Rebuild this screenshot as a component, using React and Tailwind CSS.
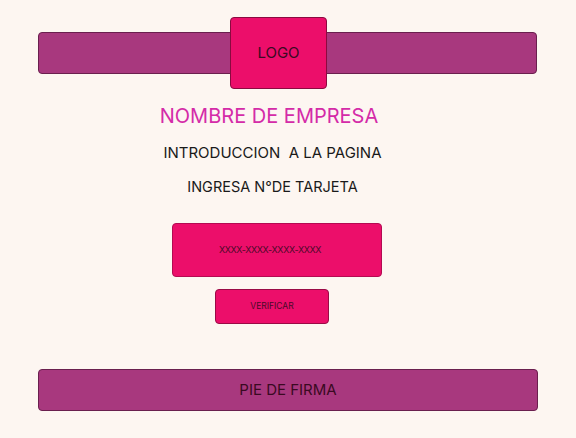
import React from 'react';

export default function App() {
    return (
        <div
            className="w-[576px] h-[438px] bg-[#fdf6f1] text-[#1a1a1a] flex flex-col"
            style={{ fontFamily: 'Inter, "Noto Sans", sans-serif' }}
        >
            {/* cabecera con logo */}
            <div className="relative pt-[32px] px-[38px]">
                <div className="h-[42px] w-[499px] bg-[#a8387e] border border-[#6a1f4e] rounded-[4px]" />
                <div className="absolute left-[230px] top-[17px] w-[97px] h-[72px] bg-[#ec0e6a] border border-[#8a0a40] rounded-[4px] flex items-center justify-center text-[15px] text-[#3a0a22]">
                    LOGO
                </div>
            </div>

            <div className="flex flex-col items-center">
                <h1 className="mt-[29px] ml-[-38px] text-[20px] leading-[26px] text-[#d42ba8]">
                    NOMBRE DE EMPRESA
                </h1>
                <p className="mt-[15px] ml-[-31px] text-[15px] leading-[18px] whitespace-pre">
                    INTRODUCCION  A LA PAGINA
                </p>
                <p className="mt-[16px] ml-[-31px] text-[14.5px] leading-[18px]">
                    INGRESA N°DE TARJETA
                </p>

                <div className="mt-[27px] ml-[-22px] w-[210px] h-[54px] pr-[14px] bg-[#ec0e6a] border border-[#b40a52] rounded-[4px] flex items-center justify-center text-[9px] tracking-[-0.35px] text-[#4a0a28]">
                    XXXX-XXXX-XXXX-XXXX
                </div>
                <button className="mt-[12px] ml-[-32px] w-[114px] h-[35px] bg-[#ec0e6a] border border-[#9a0a46] rounded-[4px] flex items-center justify-center text-[8.5px] text-[#4a0a28]">
                    VERIFICAR
                </button>
            </div>

            <div className="mt-auto mb-[27px] mx-[38px] h-[42px] bg-[#a8387e] border border-[#6a1f4e] rounded-[4px] flex items-center justify-center text-[15px] text-[#3a0a22]">
                PIE DE FIRMA
            </div>
        </div>
    );
}
